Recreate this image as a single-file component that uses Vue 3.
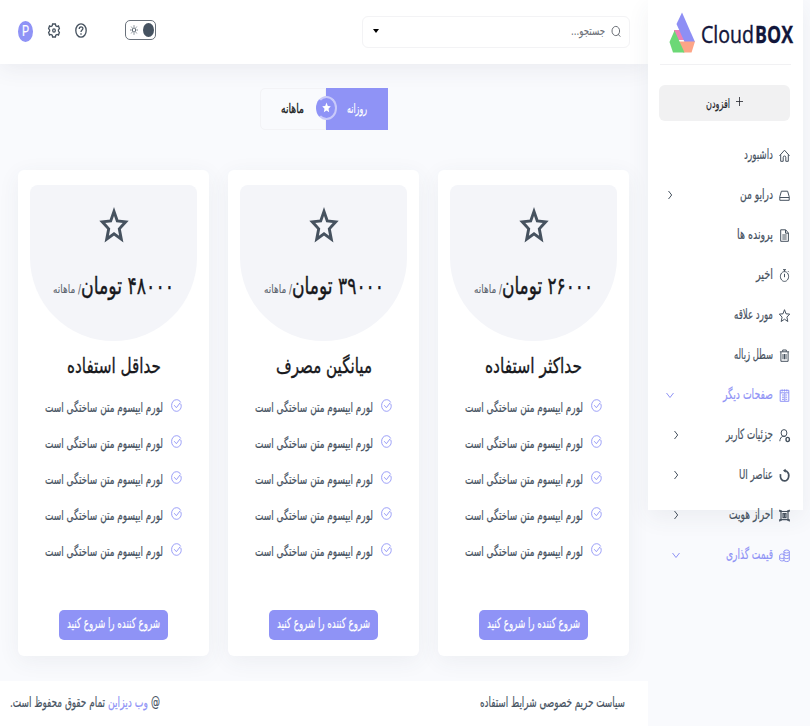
<script setup>
import { h } from 'vue'

// Condensed text label: fits its string to the width `w`.
const T = (p) =>
  h('svg', { width: p.w, height: p.s, class: 'fit' }, [
    h(
      'text',
      {
        x: p.ltr ? 0 : p.w,
        y: p.s * 0.5 + p.s * (p.ltr ? 0.27 : 0.32),
        'font-size': p.s,
        'font-weight': p.b || 400,
        'font-family': p.f || "'DejaVu Sans', 'Noto Sans', sans-serif",
        direction: p.ltr ? 'ltr' : 'rtl',
        textLength: p.w,
        lengthAdjust: 'spacingAndGlyphs',
        fill: 'currentColor',
        'stroke-width': p.k || 0.2,
      },
      p.t
    ),
  ])
T.props = ['t', 'w', 's', 'b', 'f', 'k', 'ltr']

const menu = [
  { t: 'داشبورد', w: 29, icon: 'home' },
  { t: 'درایو من', w: 33, icon: 'drive', arrow: 'side' },
  { t: 'پرونده ها', w: 36, icon: 'file' },
  { t: 'اخیر', w: 17, icon: 'clock' },
  { t: 'مورد علاقه', w: 39, icon: 'star' },
  { t: 'سطل زباله', w: 39, icon: 'trash' },
  { t: 'صفحات دیگر', w: 50, icon: 'pages', arrow: 'down', on: true },
  { t: 'جزئیات کاربر', w: 47, icon: 'user', arrow: 'side', sub: true },
  { t: 'عناصر UI', w: 34, icon: 'ring', arrow: 'side', sub: true },
  { t: 'احراز هویت', w: 44, icon: 'auth', arrow: 'side', sub: true },
  { t: 'قیمت گذاری', w: 47, icon: 'coins', arrow: 'down', sub: true, on: true },
]

const icons = {
  home: 'M.5 6.8 5.500 1.200l5 5.600M1.700 5.800v6.500h2.500V8.200C4.200 6.600 6.800 6.600 6.800 8.200v4.100h2.500V5.800',
  drive: 'M2.4 2.2h6.2l1.6 5.5v3.6H.8V7.7zM.8 8.500h9.400',
  file: 'M1.7.8h5L9.4 4v8.3H1.7zM6.5 1v3.2h2.8M3.3 6h4.4M3.3 8h4.4M3.3 10h4.4',
  clock: 'M5.5 2.6a4.1 4.9 0 1 0 .01 0M4 .7h3M5.5.7v1.8M5.5 4.8v3.4M9 2.2l.8.9',
  star: 'M5.500.7 7 4.800l3.700.3-2.800 3 .9 4.400-3.300-2.300-3.300 2.300.9-4.400-2.800-3L4 4.800z',
  trash: 'M.9 2.8h9.2M3.7 2.6V1h3.6v1.6M1.9 3v9.3h7.2V3M4 5v5.3M5.5 5v5.3M7 5v5.3',
  pages: 'M1.2 1.3h8.6v11H1.2zM1.2 3.8h8.6M3.2.5v2M5.5.5v2M7.8.5v2M3 6h2M6.5 6h1.7M3 8.2h2M6.5 8.2h1.7M3 10.3h2M5.8 4v8M6.5 10.3h1.7',
  ring: 'M1.500 5.200C.9 9 2.600 11.900 5.500 11.900 9.900 11.900 11.200 5 8 2.600L5.600 1.500',
  auth: 'M2 1v11M9 1v11M1 2.500h9M1 10.700h9M.7.8v2M10.300.8v2M.7 10.200v2.200M10.300 10.200v2.200M4 4.600h3v4H4zM5.500 4.600v4',
}

const plans = [
  { price: '۲۶۰۰۰ تومان', pw: 91, title: 'حداکثر استفاده', tw: 97 },
  { price: '۳۹۰۰۰ تومان', pw: 92, title: 'میانگین مصرف', tw: 96 },
  { price: '۴۸۰۰۰ تومان', pw: 93, title: 'حداقل استفاده', tw: 94 },
]
</script>

<template>
  <div class="page" dir="rtl">
    <aside class="side">
      <div class="panel">
        <div class="brand" dir="ltr">
          <svg class="mark" width="27" height="41" viewBox="0 0 27 41">
            <path d="M5 18h7l3.500 10H5z" fill="#ee82b4" />
            <path d="M13 .5 26 30H15.500L7.500 12z" fill="#8e8ff5" />
            <path d="M10 29.500h16L22.500 40.500H14z" fill="#fda587" />
            <path d="M5.500 18.500 15.500 40.500H4L.5 30z" fill="#6cd876" />
          </svg>
          <div class="word">
            <T t="Cloud" :w="53" :s="24" ltr k="0.400" f="'Open Sans', sans-serif" />
            <T t="BOX" :w="38" :s="24" b="700" ltr k="0.300" f="'Open Sans', sans-serif" />
          </div>
        </div>
        <button class="add">
          <svg width="7" height="9" viewBox="0 0 7 9"><path d="M3.500 0v9M0 4.500h7" /></svg>
          <T t="افزودن" :w="24" :s="13" />
        </button>
        <nav class="menu">
          <a v-for="m in menu" :key="m.t" class="item" :class="{ on: m.on, sub: m.sub }">
            <svg class="ico" :class="m.icon" width="11" height="13" viewBox="0 0 11 13">
              <template v-if="m.icon === 'user'">
                <ellipse cx="5" cy="4" rx="2.900" ry="3.400" />
                <path d="M.8 12.200c.2-2.600 1.300-4.300 3-5M3.800 7.300h2.700" />
                <ellipse cx="8.700" cy="10.500" rx="1.700" ry="2.100" stroke-width="1.400" />
              </template>
              <template v-else-if="m.icon === 'coins'">
                <path d="M5 2.500v9M10.300 2.500v9" />
                <ellipse cx="7.600" cy="2.500" rx="2.700" ry="1.500" />
                <path d="M5 5.500c1 1.400 4.300 1.400 5.300 0M5 8.500c1 1.400 4.300 1.400 5.300 0M5 11.500c1 1.400 4.300 1.400 5.300 0" />
                <path d="M5 5.500C3.800 4.600.7 5 .7 6.300v4.500c.4 1.100 2.800 1.500 4.300.7M.7 8.500c.6 1 2.800 1.300 4.300.6" />
              </template>
              <template v-else-if="m.icon === 'ring'">
                <path :d="icons.ring" />
                <path d="M6.600-.2v4L4 1.600z" class="tip" />
              </template>
              <path v-else :d="icons[m.icon]" />
            </svg>
            <T :t="m.t" :w="m.w" :s="14" />
            <svg v-if="m.arrow" class="arrow" width="8" height="10" viewBox="0 0 8 10">
              <path :d="m.arrow === 'side' ? 'M2.500 1 5.700 5 2.500 9' : 'M.5 3 4 7.500 7.500 3'" />
            </svg>
          </a>
        </nav>
      </div>
    </aside>

    <div class="content">
      <header class="top">
        <div class="search">
          <svg width="10" height="13" viewBox="0 0 10 13">
            <ellipse cx="4.800" cy="6" rx="3.800" ry="4.600" />
            <path d="m6.800 9 2.500 2.600" />
          </svg>
          <T t="جستجو..." :w="34" :s="12" k="0.100" />
          <i class="caret"></i>
        </div>
        <div class="tools">
          <span class="switch">
            <i class="knob"></i>
            <svg width="8" height="10" viewBox="0 0 8 10">
              <ellipse cx="4" cy="5" rx="1.700" ry="2.100" />
              <path d="M4 .4v1.300M4 8.300v1.300M.2 5h1.200M6.600 5h1.200M1.300 1.700l.7.9M6 7.400l.7.900M1.300 8.300l.7-.9M6 2.600l.7-.9" />
            </svg>
          </span>
          <svg class="tool help" width="12" height="15" viewBox="0 0 12 15">
            <ellipse cx="6" cy="7.500" rx="5.200" ry="6.700" />
            <path d="M4.200 6c0-3 3.700-2.700 3.700-.5C7.900 7 6 7 6 8.900M6 10.300v1.400" />
          </svg>
          <svg class="tool gear" width="12" height="15" viewBox="0 0 12 15">
            <path d="M4.600 1h2.800l.4 1.800 1.300.8 1.400-.6.900 2.700-1 1.200v1.200l1 1.200-.9 2.700-1.400-.6-1.300.8-.4 1.800H4.600l-.4-1.800-1.300-.8-1.400.6-.9-2.700 1-1.200V6.900l-1-1.200L1.500 3l1.400.6 1.300-.8z" />
            <ellipse cx="6" cy="7.500" rx="1.300" ry="1.700" />
          </svg>
          <span class="avatar"><T t="P" :w="7" :s="15" ltr f="Roboto, sans-serif" /></span>
        </div>
      </header>

      <main class="main">
        <div class="period">
          <span class="opt active"><T t="روزانه" :w="20" :s="13" /></span>
          <span class="opt"><T t="ماهانه" :w="23" :s="13" k="0.300" /></span>
          <span class="badge">
            <svg width="9" height="11" viewBox="0 0 9 11">
              <path d="M4.500.5 5.800 3.900 8.800 4.200 6.500 6.700 7.200 10.300 4.500 8.500 1.800 10.300 2.500 6.700.2 4.200 3.200 3.900z" />
            </svg>
          </span>
        </div>

        <section class="plans">
          <article v-for="p in plans" :key="p.title" class="card">
            <div class="hero">
              <svg class="big" width="30" height="37" viewBox="0 0 30 37">
                <path d="M15 4.500 18.300 14 26.700 14.800 20.300 21.900 22.300 32.200 15 26.900 7.700 32.200 9.700 21.900 3.300 14.800 11.700 14z" />
              </svg>
              <div class="price">
                <T :t="p.price" :w="p.pw" :s="24" k="0.400" />
                <span class="per"><T t="/ ماهانه" :w="28" :s="11.500" k="0.100" /></span>
              </div>
            </div>
            <h2 class="name"><T :t="p.title" :w="p.tw" :s="21" k="0.350" /></h2>
            <ul class="list">
              <li v-for="n in 5" :key="n">
                <svg class="check" width="11" height="13" viewBox="0 0 11 13">
                  <path d="M9.700 4.700C11.300 8.500 8.800 12.300 5.500 12.300 2.600 12.300.6 9.700.6 6.500S2.600.7 5.500.7c1.900 0 3.300 1 4.200 2.600M3.200 6.200l2.200 2.500 3.800-5" />
                </svg>
                <T t="لورم ایپسوم متن ساختگی است" :w="118" :s="13.500" />
              </li>
            </ul>
            <button class="start"><T t="شروع کننده را شروع کنید" :w="93" :s="14" /></button>
          </article>
        </section>
      </main>

      <footer class="foot">
        <T t="سیاست حریم خصوصی شرایط استفاده" :w="145" :s="14" />
        <div class="copy">
          <T t="@" :w="9" :s="14" />
          <span class="link"><T t="وب دیزاین" :w="40" :s="14" /></span>
          <T t="تمام حقوق محفوظ است." :w="95" :s="14" />
        </div>
      </footer>
    </div>
  </div>
</template>

<style>
body {
  margin: 0;
  background: #f9fafd;
  overflow: hidden;
}
</style>

<style scoped>
.page {
  display: flex;
  width: 810px;
  height: 726px;
  overflow: hidden;
  background: #f9fafd;
  color: #46525f;
  font-family: 'DejaVu Sans', 'Noto Sans', sans-serif;
}
svg {
  display: block;
  flex: none;
  overflow: visible;
  fill: none;
  stroke: currentColor;
  stroke-width: 1;
}
button {
  border: 0;
  padding: 0;
  margin: 0;
}
.side {
  width: 155px;
  flex: none;
  padding-right: 7px;
  z-index: 2;
}
.panel {
  height: 510px;
  background: #fff;
  box-shadow: 0 8px 22px rgba(60, 70, 90, 0.07);
}
.brand {
  display: flex;
  align-items: center;
  box-sizing: border-box;
  height: 65px;
  margin: 0 12px;
  padding-left: 9px;
  border-bottom: 1px solid #f1f1f3;
  color: #12163a;
}
.mark {
  stroke: none;
  margin-right: 5px;
}
.word {
  display: flex;
  gap: 1px;
  padding-top: 5px;
}
.add {
  display: flex;
  align-items: center;
  justify-content: center;
  gap: 6px;
  width: 131px;
  height: 36px;
  margin: 20px 13px 14px auto;
  border-radius: 6px;
  background: #f1f1f2;
  color: #25262c;
}
.add > svg:first-child {
  stroke-width: 0.800;
  margin-bottom: 3px;
}
.item {
  display: flex;
  align-items: center;
  height: 40px;
  padding: 0 13px 0 18px;
  gap: 6px;
}
.item.sub {
  padding-left: 24px;
}
.item.on {
  color: #8f93f6;
}
.ico {
  margin-top: 1px;
}
.ico.ring {
  stroke-width: 1.700;
}
.tip {
  fill: currentColor;
  stroke: none;
}
.ico.auth {
  stroke-width: 1.200;
}
.arrow {
  margin-right: auto;
}
.content {
  width: 648px;
  flex: none;
  display: flex;
  flex-direction: column;
}
.top {
  display: flex;
  align-items: center;
  justify-content: space-between;
  box-sizing: border-box;
  height: 64px;
  padding: 0 18px;
  background: #fff;
  box-shadow: 0 5px 22px rgba(60, 70, 90, 0.08);
}
.search {
  display: flex;
  align-items: center;
  gap: 6px;
  box-sizing: border-box;
  width: 268px;
  height: 32px;
  padding: 0 8px 2px 10px;
  border: 1px solid #f3f3f5;
  border-radius: 6px;
  color: #6b6f76;
}
.caret {
  margin-right: auto;
  border: 3px solid transparent;
  border-top: 4px solid #000;
  border-bottom: 0;
}
.tools {
  display: flex;
  align-items: center;
  height: 60px;
  padding-bottom: 4px;
}
.switch {
  display: flex;
  align-items: center;
  justify-content: space-between;
  box-sizing: border-box;
  width: 31px;
  height: 20px;
  padding: 0 1px 0 4px;
  margin-left: 38px;
  border: 1px solid #69717b;
  border-radius: 5px;
}
.switch svg {
  stroke-width: 0.900;
}
.knob {
  width: 11px;
  height: 14px;
  border-radius: 50%;
  background: #465361;
}
.tool {
  stroke-width: 1.300;
}
.help {
  margin-left: 15px;
}
.gear {
  margin-left: 15px;
}
.avatar {
  display: flex;
  align-items: center;
  justify-content: center;
  width: 15px;
  height: 21px;
  margin-top: 3px;
  border-radius: 50%;
  background: #8f93f6;
  color: #fff;
}
.main {
  flex: 1;
  display: flex;
  flex-direction: column;
  padding: 24px 19px 0 18px;
}
.period {
  position: relative;
  display: flex;
  align-self: center;
  height: 42px;
}
.opt {
  display: flex;
  align-items: center;
  justify-content: center;
  box-sizing: border-box;
  width: 66px;
  padding-bottom: 1px;
  border: 1px solid #f3f3f6;
  border-radius: 5px 0 0 5px;
  color: #181a20;
}
.opt.active {
  width: 62px;
  border: 0;
  border-radius: 0;
  background: #8f93f6;
  color: #fff;
}
.badge {
  position: absolute;
  left: 56px;
  top: 8px;
  display: flex;
  align-items: center;
  justify-content: center;
  box-sizing: border-box;
  width: 21px;
  height: 24px;
  border: 2px solid #c9cafa;
  border-left-color: #8f93f6;
  border-radius: 50%;
  background: #8f93f6;
  color: #fff;
}
.badge svg {
  fill: #fff;
  stroke: none;
  margin-bottom: 1px;
}
.plans {
  display: grid;
  grid-template-columns: repeat(3, 191px);
  gap: 19px;
  margin-top: 40px;
}
.card {
  box-sizing: border-box;
  height: 485.500px;
  padding: 15px 12px 0;
  display: flex;
  flex-direction: column;
  align-items: center;
  border-radius: 6px;
  background: #fff;
  box-shadow: 0 5px 22px rgba(60, 70, 90, 0.065);
}
.hero {
  display: flex;
  flex-direction: column;
  align-items: center;
  box-sizing: border-box;
  width: 167px;
  height: 156px;
  padding-top: 22px;
  border-radius: 8px 8px 84px 84px / 8px 8px 84px 84px;
  background: #f4f5f9;
}
.big {
  stroke-width: 2.900;
}
.price {
  display: flex;
  align-items: center;
  height: 26px;
  margin-top: 29px;
  color: #17181c;
}
.per {
  padding-top: 7px;
  color: #5e6670;
}
.name {
  display: flex;
  align-items: center;
  height: 24px;
  margin: 13px 0 12px;
  color: #17181c;
}
.list {
  margin: 0;
  padding: 0;
  list-style: none;
}
.list li {
  display: flex;
  align-items: center;
  gap: 8px;
  height: 36px;
}
.check {
  margin-bottom: 5px;
  color: #8f93f6;
  stroke-width: 0.900;
}
.start {
  display: flex;
  align-items: center;
  justify-content: center;
  width: 109px;
  height: 30px;
  margin-top: 39.500px;
  padding-bottom: 2px;
  border-radius: 5px;
  background: #8f93f6;
  color: #fff;
}
.foot {
  display: flex;
  align-items: center;
  justify-content: space-between;
  box-sizing: border-box;
  height: 45px;
  padding: 0 23px 2px 10px;
  background: #fff;
}
.copy {
  display: flex;
  gap: 3px;
}
.link {
  color: #8f93f6;
}
</style>
